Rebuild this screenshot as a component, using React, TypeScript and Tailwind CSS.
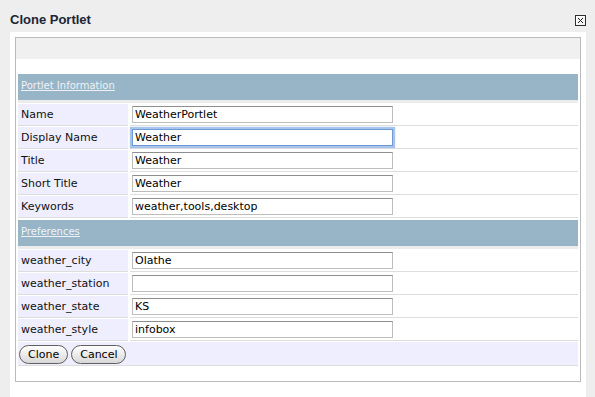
const infoRows = [
  { label: 'Name', value: 'WeatherPortlet' },
  { label: 'Display Name', value: 'Weather', focused: true },
  { label: 'Title', value: 'Weather' },
  { label: 'Short Title', value: 'Weather' },
  { label: 'Keywords', value: 'weather,tools,desktop' },
];

const prefRows = [
  { label: 'weather_city', value: 'Olathe' },
  { label: 'weather_station', value: '' },
  { label: 'weather_state', value: 'KS' },
  { label: 'weather_style', value: 'infobox' },
];

function CloseBox() {
  return (
    <svg width="11" height="11" viewBox="0 0 11 11" className="mt-[15px] block">
      <rect x="0.5" y="0.5" width="10" height="10" fill="#f3f3f3" stroke="#2e2e2e" />
      <path d="M1 1.5h9M1.5 1v9" stroke="#ffffff" />
      <path d="M3 3l5 5M8 3l-5 5" stroke="#222" strokeWidth="1" />
    </svg>
  );
}

function SectionBar({ title, first }: { title: string; first?: boolean }) {
  return (
    <div
      className={`${first ? '' : 'mt-[2px]'} h-[29px] border-b-[3px] border-[#ececec] bg-[#97b5c7] pl-[3px] pt-[5px] text-[10px] leading-[13px]`}
    >
      <a href="#" className="text-[#eef2f6] underline">
        {title}
      </a>
    </div>
  );
}

function FieldRow({ label, value, focused }: { label: string; value: string; focused?: boolean }) {
  return (
    <div className="mt-[1px] flex gap-[2px]">
      <div className="h-[22px] w-[110px] shrink-0 border-b border-[#dddddd] bg-[#eeeeff] pl-[3px] pt-[4px] leading-[14px]">
        {label}
      </div>
      <div className="h-[22px] flex-1 border-b border-[#dddddd] bg-white pl-[2px] pt-[2px]">
        <input
          readOnly
          value={value}
          className={
            focused
              ? 'block h-[17px] w-[261px] border border-[#6e9ad6] bg-white pl-[2px] text-[11px] leading-[15px] text-black shadow-[0_0_1px_2px_#a6c4ec] outline-none'
              : 'block h-[17px] w-[261px] border border-[#bdbdbd] border-t-[#8e8e8e] bg-white pl-[2px] text-[11px] leading-[15px] text-black outline-none'
          }
        />
      </div>
    </div>
  );
}

export default function App() {
  return (
    <div className="min-h-[397px] w-[595px] bg-[#eeeeee] font-['DejaVu_Sans',Verdana,sans-serif] text-[11px] text-[#111111]">
      <div className="flex h-[32px] items-start justify-between pl-[10px] pr-[9px]">
        <h1 className="mt-[12px] font-['Liberation_Sans',Arial,sans-serif] text-[13px] font-bold leading-[15px] text-[#1b2536]">
          Clone Portlet
        </h1>
        <CloseBox />
      </div>

      <div className="ml-[10px] h-[365px] w-[576px] bg-white pl-[5px] pt-[5px]">
        <div className="w-[566px] border border-[#bbbbbb] pb-[15px]">
          <div className="h-[21px] bg-[#f0f0f0]" />
          <div className="h-[15px]" />

          <div className="px-[2px]">
            <SectionBar title="Portlet Information" first />
            {infoRows.map((r) => (
              <FieldRow key={r.label} label={r.label} value={r.value} focused={r.focused} />
            ))}

            <SectionBar title="Preferences" />
            {prefRows.map((r) => (
              <FieldRow key={r.label} label={r.label} value={r.value} />
            ))}

            <div className="mt-[1px] flex h-[24px] gap-[3px] border-b border-[#dddddd] bg-[#eeeeff] pl-[1px] pt-[3px]">
              <button className="h-[19px] rounded-full border border-[#5f5f5f] bg-gradient-to-b from-white to-[#d8d8d8] px-[8px] text-[11px] leading-[16px] text-black">
                Clone
              </button>
              <button className="h-[19px] rounded-full border border-[#5f5f5f] bg-gradient-to-b from-white to-[#d8d8d8] px-[8px] text-[11px] leading-[16px] text-black">
                Cancel
              </button>
            </div>
          </div>
        </div>
      </div>
    </div>
  );
}
